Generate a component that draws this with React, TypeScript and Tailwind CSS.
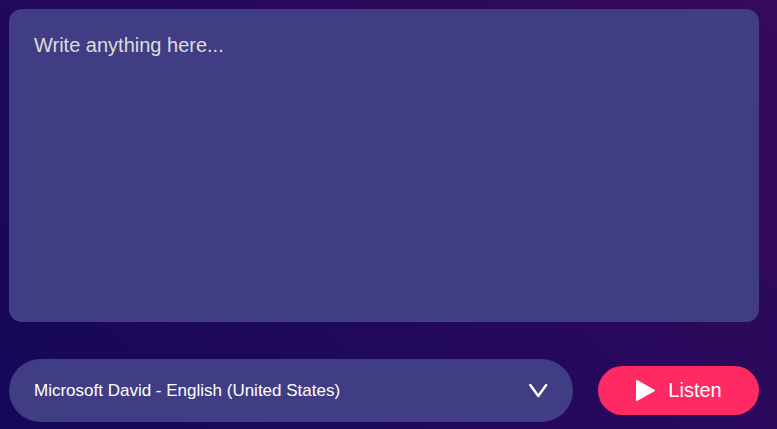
import { useState } from "react";

const voices = ["Microsoft David - English (United States)"];

export default function App() {
  const [text, setText] = useState("");

  return (
    <main className="min-h-screen bg-[linear-gradient(45deg,#140759,#360a5d)] pt-[9px] pr-[18px] pb-[7px] pl-[9px] font-['Liberation_Sans',Arial,sans-serif] text-white">
      <textarea
        aria-label="Text to read aloud"
        placeholder="Write anything here..."
        value={text}
        onChange={(event) => setText(event.target.value)}
        className="block h-[313px] w-full resize-none rounded-[13px] bg-[#403d84] px-[25px] py-6 text-[20px] leading-6 outline-none placeholder:text-[#dddddd]"
      />
      <div className="mt-[37px] flex items-center gap-[25px]">
        <div className="grid flex-1 items-center">
          <select
            aria-label="Voice"
            className="col-start-1 row-start-1 h-[63px] w-full appearance-none rounded-full bg-[#403d84] pr-12 pl-[25px] text-[17px] outline-none"
          >
            {voices.map((voice) => (
              <option key={voice}>{voice}</option>
            ))}
          </select>
          <svg
            aria-hidden="true"
            viewBox="0 0 20 15"
            className="pointer-events-none col-start-1 row-start-1 mr-[25px] h-[15px] w-5 justify-self-end"
            fill="none"
            stroke="currentColor"
            strokeWidth="2.4"
            strokeLinecap="round"
            strokeLinejoin="round"
          >
            <path d="M2.3 2 L10.3 13 L18.2 2" />
          </svg>
        </div>
        <button
          type="button"
          className="flex h-[49px] w-[161px] items-center justify-center gap-[13px] rounded-full bg-[#ff2963] text-[20px] leading-[23px]"
        >
          <svg
            aria-hidden="true"
            viewBox="0 0 20 21"
            className="h-[21px] w-5"
            fill="currentColor"
            stroke="currentColor"
            strokeWidth="2"
            strokeLinejoin="round"
          >
            <path d="M2 1 L19 10.5 L2 20 Z" />
          </svg>
          Listen
        </button>
      </div>
    </main>
  );
}
